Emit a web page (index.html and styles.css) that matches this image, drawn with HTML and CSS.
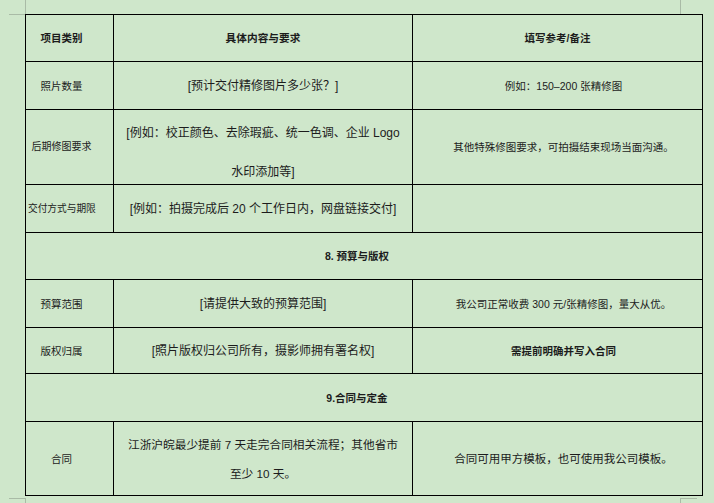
FILE: index.html
```html
<!DOCTYPE html>
<html lang="zh-CN">
<head>
<meta charset="utf-8">
<title>拍摄需求表</title>
<link rel="stylesheet" href="styles.css">
</head>
<body>
<div class="mark mark-tl-v"></div>
<div class="mark mark-tl-h"></div>
<div class="mark mark-tr-v"></div>
<div class="mark mark-bl-v"></div>
<div class="mark mark-bl-h"></div>
<div class="mark mark-br-v"></div>
<div class="mark mark-br-h"></div>
<table class="sheet">
  <colgroup>
    <col class="c1">
    <col class="c2">
    <col class="c3">
  </colgroup>
  <tr class="r47 head">
    <td class="left">项目类别</td>
    <td class="mid-head">具体内容与要求</td>
    <td class="right-head">填写参考/备注</td>
  </tr>
  <tr class="r48">
    <td class="left">照片数量</td>
    <td class="mid">[预计交付精修图片多少张？]</td>
    <td class="right">例如：150–200 张精修图</td>
  </tr>
  <tr class="r75">
    <td class="left small">后期修图要求</td>
    <td class="mid top"><span class="ln1">[例如：校正颜色、去除瑕疵、统一色调、企业 Logo</span><span class="ln2">水印添加等]</span></td>
    <td class="right">其他特殊修图要求，可拍摄结束现场当面沟通。</td>
  </tr>
  <tr class="r48">
    <td class="left smaller">交付方式与期限</td>
    <td class="mid">[例如：拍摄完成后 20 个工作日内，网盘链接交付]</td>
    <td class="right"></td>
  </tr>
  <tr class="r47">
    <td class="section" colspan="3">8. 预算与版权</td>
  </tr>
  <tr class="r48">
    <td class="left">预算范围</td>
    <td class="mid">[请提供大致的预算范围]</td>
    <td class="right">我公司正常收费 300 元/张精修图，量大从优。</td>
  </tr>
  <tr class="r46">
    <td class="left">版权归属</td>
    <td class="mid">[照片版权归公司所有，摄影师拥有署名权]</td>
    <td class="right bold">需提前明确并写入合同</td>
  </tr>
  <tr class="r48">
    <td class="section" colspan="3">9.合同与定金</td>
  </tr>
  <tr class="r74">
    <td class="left">合同</td>
    <td class="mid tall">江浙沪皖最少提前 7 天走完合同相关流程；其他省市<br>至少 10 天。</td>
    <td class="right big">合同可用甲方模板，也可使用我公司模板。</td>
  </tr>
</table>
</body>
</html>
```

FILE: styles.css
```css
html, body {
  margin: 0;
  padding: 0;
  background: #cfe7cb;
}
body {
  width: 714px;
  height: 503px;
  overflow: hidden;
  position: relative;
  padding: 14px 0 0 25px;
  box-sizing: border-box;
  font-family: "Liberation Sans", "Noto Sans CJK SC", sans-serif;
  color: #1c1c1c;
}
.mark {
  position: absolute;
  background: #a9bba6;
}
.mark-tl-v { left: 25px; top: 0; width: 1px; height: 14px; }
.mark-tl-h { left: 9px; top: 14px; width: 16px; height: 1px; }
.mark-tr-v { left: 680px; top: 0; width: 1px; height: 14px; }
.mark-bl-v { left: 25px; top: 498px; width: 1px; height: 5px; }
.mark-bl-h { left: 9px; top: 498px; width: 16px; height: 1px; }
.mark-br-v { left: 680px; top: 498px; width: 1px; height: 5px; }
.mark-br-h { left: 680px; top: 498px; width: 17px; height: 1px; }

.sheet {
  border-collapse: collapse;
  table-layout: fixed;
  width: 677px;
}
.c1 { width: 88px; }
.c2 { width: 299px; }
.c3 { width: 290px; }
.sheet td {
  border: 1px solid #000;
  padding: 0;
  vertical-align: middle;
  text-align: center;
  font-size: 10.5px;
  line-height: 16px;
  white-space: nowrap;
}
.r47 { height: 47px; }
.r48 { height: 48px; }
.r46 { height: 46px; }
.r75 { height: 75px; }
.r74 { height: 74px; }

.head td { font-weight: bold; }
.sheet td.left { padding: 0 18px 0 2px; }
.sheet td.left.small { font-size: 10px; }
.sheet td.left.smaller { font-size: 9.7px; }
.sheet td.mid { font-size: 12px; }
.sheet td.mid-head { font-size: 10.7px; font-weight: bold; }
.sheet td.right { padding-left: 12px; }
.sheet td.right-head { font-weight: bold; }
.sheet td.bold { font-weight: bold; }
.sheet td.big { font-size: 11.5px; }
.sheet td.section {
  font-weight: bold;
  padding-right: 14px;
}
.sheet td.top {
  vertical-align: top;
  padding-top: 13px;
}
.ln1, .ln2 {
  display: block;
  line-height: 20px;
}
.ln2 { margin-top: 19px; }
.sheet td.tall {
  line-height: 29px;
  font-size: 11.7px;
}
```
